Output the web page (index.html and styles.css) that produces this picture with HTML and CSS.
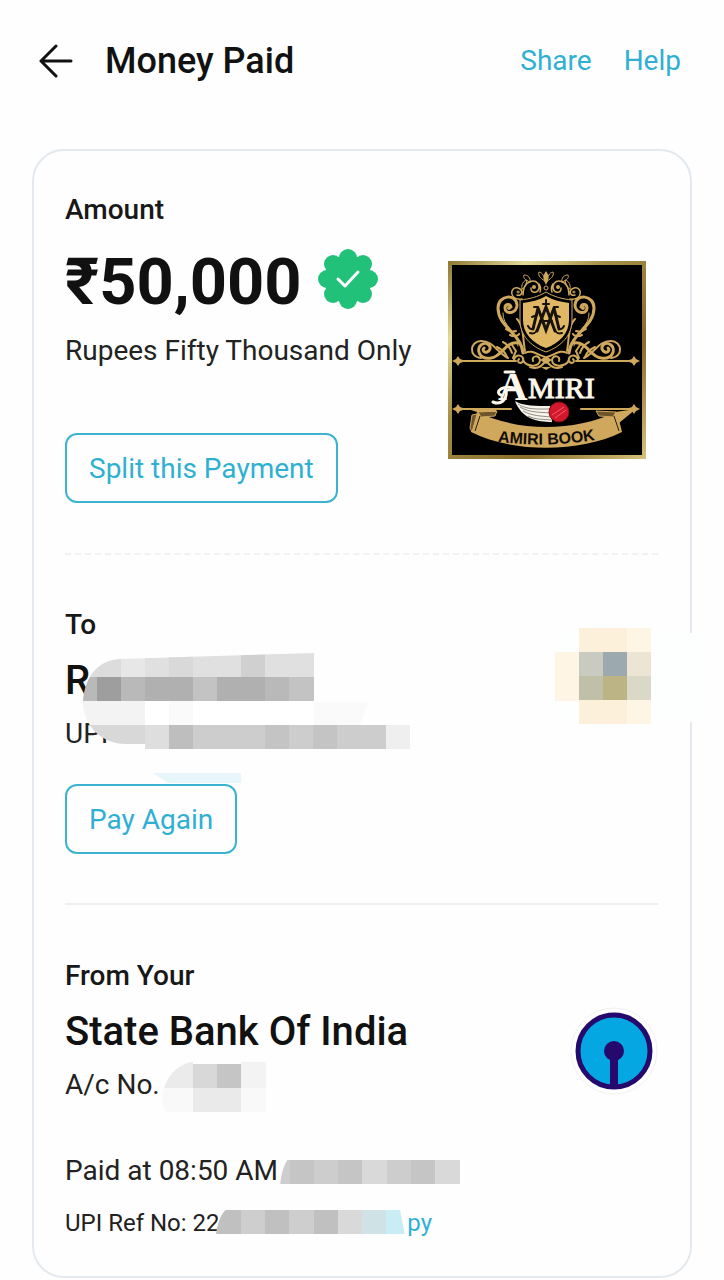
FILE: index.html
```
<!DOCTYPE html>
<html lang="en">
<head>
    <meta charset="UTF-8">
    <meta name="viewport" content="width=device-width, initial-scale=1.0">
    <title>Money Paid</title>
    <link rel="stylesheet" href="styles.css">
</head>
<body>
    <header class="topbar">
        <button class="back" type="button" aria-label="Back">
            <svg width="34" height="36" viewBox="0 0 34 36" fill="none" stroke="#111" stroke-width="3" stroke-linecap="round" stroke-linejoin="round">
                <path d="M32 18H2M17 3L2 18l15 15"/>
            </svg>
        </button>
        <h1>Money Paid</h1>
        <nav class="actions">
            <a href="#">Share</a>
            <a href="#">Help</a>
        </nav>
    </header>

    <main class="card">
        <section class="amount-section">
            <div>
                <h2 class="label">Amount</h2>
                <div class="amount">
                    <strong>₹50,000</strong>
                    <svg class="verified" width="62" height="62" viewBox="-31 -31 62 62" aria-label="Verified">
                        <g fill="#21c17a">
                            <circle r="24"/>
                            <circle cx="0" cy="-21" r="9"/>
                            <circle cx="15" cy="-15" r="9"/>
                            <circle cx="21" cy="0" r="9"/>
                            <circle cx="15" cy="15" r="9"/>
                            <circle cx="0" cy="21" r="9"/>
                            <circle cx="-15" cy="15" r="9"/>
                            <circle cx="-21" cy="0" r="9"/>
                            <circle cx="-15" cy="-15" r="9"/>
                        </g>
                        <path d="M-10 0l7 7L10-7" fill="none" stroke="#fff" stroke-width="3" stroke-linecap="round" stroke-linejoin="round"/>
                    </svg>
                </div>
                <p class="words">Rupees Fifty Thousand Only</p>
                <button class="outline" type="button">Split this Payment</button>
            </div>
            <svg class="crest" width="198" height="198" viewBox="0 0 198 198" role="img" aria-label="Amiri Book">
                <defs>
                    <linearGradient id="frame" x1="0" y1="0" x2="1" y2="1">
                        <stop offset="0" stop-color="#8d7733"/>
                        <stop offset=".2" stop-color="#e3d99a"/>
                        <stop offset=".4" stop-color="#a58f45"/>
                        <stop offset=".7" stop-color="#8a6c2c"/>
                        <stop offset="1" stop-color="#d8c27a"/>
                    </linearGradient>
                    <path id="ribbon-line" d="M45 180Q98 188 152 178"/>
                    <g id="half" fill="none" stroke="#cfa85c" stroke-linecap="round">
                        <path stroke-width="3" d="M75 92C73 72 50 66 50 47C50 34 68 32 69 44C69 53 57 54 57 47C57 43 62 42 63 46"/>
                        <path stroke-width="1" d="M70 85C70 69 54 66 55 52"/>
                        <path stroke-width="2" d="M69 58C76 65 75 80 77 90M58 68C62 71 65 71 68 70M62 74c4 2 8 1 9-1"/>
                        <path stroke-width="1.5" d="M74 38C61 40 61 25 70 27C76 29 74 36 69 34M75 34C75 19 89 16 91 25C92 33 82 33 83 27M92 31c1-3 1-5-1-8"/>
                        <path stroke-width="1" d="M74 28c-1-4 1-8 5-9-1 5-2 8-5 9M82 21c-6-2-7-5-6-7 4 0 7 3 6 7M97 20C91 17 90 13 91 11c4 1 5 4 6 9"/>
                        <path stroke-width="3" d="M70 82C57 80 54 96 43 97C31 99 28 88 33 84C40 79 46 88 39 91C36 92 34 89 36 87"/>
                        <path stroke-width="2" d="M33 97C20 96 22 80 33 80C46 80 48 91 60 97"/>
                        <path stroke-width="2" d="M49 86c6 3 8 5 10 10M55 81c4 2 7 5 9 11M64 84l4 6-3 7"/>
                        <path stroke-width="2" d="M10 100H68M10 148H63"/>
                        <path stroke-width="2" d="M66 99C67 92 77 94 75 100C73 104 68 101 71 98M75 99C78 106 92 107 92 99C91 93 83 95 85 100M77 92C84 88 89 94 97 96M82 106c6 2 10 1 15-5"/>
                        <path fill="#cfa85c" stroke="none" d="M10 95l2 3 6 2-6 2-2 3-2-3-4-2 4-2zM10 143l2 3 6 2-6 2-2 3-2-3-4-2 4-2z"/>
                        <circle cx="61" cy="47" r="1" stroke-width="2"/>
                        <circle cx="70" cy="31" r="1" stroke-width="1"/>
                        <circle cx="86" cy="26" r="1" stroke-width="2"/>
                    </g>
                </defs>
                <rect width="198" height="198" fill="url(#frame)"/>
                <rect x="4" y="4" width="190" height="190" fill="#000"/>
                <use href="#half"/>
                <use href="#half" transform="translate(196 0) scale(-1 1)"/>
                <path fill="#cfa85c" d="M98 10q5 6 0 14q-5-8 0-14zM98 103l-6-4 6-4 6 4zM98 109l-5-3h10z"/>
                <circle cx="98" cy="27" r="2" fill="none" stroke="#cfa85c"/>
                <path fill="#000" stroke="#cfa85c" d="M98 31C90 36 81 38 72 39V59C72 74 82 85 98 91C114 85 124 74 124 59V39C115 38 106 36 98 31Z"/>
                <path fill="#e0b865" d="M98 35C91 39 83 41 75 42V59C75 72 84 82 98 87C112 82 121 72 121 59V42C113 41 105 39 98 35Z"/>
                <!-- crossed monogram ornament, symmetric around x=98 -->
                <g fill="none" stroke="#17120a" stroke-linecap="round">
                    <path stroke-width="3" d="M98 46L107 70M98 46L89 70M90 47L98 69L106 47M90 47L85 68M106 47L111 68"/>
                    <path stroke-width="2" d="M98 39V48M95 43h6M92 60h12M86 46h4M106 46h4M84 56l5-2M112 56l-5-2M82 72c3 1 6 0 7-3M114 72c-3 1-6 0-7-3M80 65c2 4 4 4 6 1M116 65c-2 4-4 4-6 1"/>
                </g>

                <text class="crest-serif" x="50" y="139" font-size="41" fill="#fbf7ea">A</text>
                <text class="crest-serif light" x="80" y="137" font-size="30" fill="#fbf7ea">MIRI</text>
                <path fill="none" stroke="#fbf7ea" stroke-width="3" stroke-linecap="round" d="M57 111h9M66 127C52 124 47 132 53 134M58 127C60 140 52 144 45 141"/>

                <path fill="#d0a85d" d="M29 151C72 171 124 171 169 151L174 171C132 192 64 192 23 171Z"/>
                <path fill="#6d542b" stroke="#d0a85d" d="M30 151l19-1-2 5-14 1zM168 151l-20-1 3 5 14 1zM29 153l-5 18-2-4 2-13z"/>
                <path fill="#d0a85d" d="M23 149h25v2H29zM167 151l21-3-17 14z"/>
                <path fill="none" stroke="#2b1e0d" d="M32 155l-5 15M166 155l5 15"/>
                <text class="crest-sans" font-size="16" fill="#100c06"><textPath href="#ribbon-line" startOffset="50%" text-anchor="middle">AMIRI BOOK</textPath></text>

                <path fill="#f7f4ec" d="M67 140C75 145 88 145 102 145L104 161C89 161 74 158 67 140Z"/>
                <path fill="none" stroke="#4a443c" d="M70 143C79 149 90 148 102 148M72 146C82 152 92 151 103 152M75 150C84 155 93 155 103 156M80 155C88 159 95 158 103 159" stroke-width=".6"/>
                <circle cx="111" cy="151" r="10" fill="#d3182c" stroke="#7e0b18"/>
                <path fill="none" stroke="#f0606c" d="M104 154l12-8M107 157l11-8"/>
            </svg>
        </section>

        <section class="to-section">
            <div class="party">
                <h2 class="label">To</h2>
                <p class="name">R</p>
                <p class="detail">UPI</p>
                <!-- payee name and UPI id are masked -->
                <svg class="mask mask-payee" width="350" height="138" viewBox="0 0 350 138" aria-hidden="true">
                    <clipPath id="payee-clip"><path d="M350 2V138H81V92H62C38 92 19 74 19 50C20 28 32 8 56 7L250 1V50H350Z"/></clipPath>
                    <g clip-path="url(#payee-clip)" shape-rendering="crispEdges">
                        <path fill="#dcdcdc" d="M10 0h47v25H10z"/>
                        <path fill="#e7e7e7" d="M57 0h24v25H57z"/>
                        <path fill="#e0e0e0" d="M81 0h96v25H81z"/>
                        <path fill="#d9d9d9" d="M105 0h24v25h-24z"/>
                        <path fill="#d0d0d0" d="M177 0h24v25h-24z"/>
                        <path fill="#e0e0e0" d="M201 0h49v25h-49z"/>
                        <path fill="#b9b9b9" d="M10 25h240v24H10z"/>
                        <path fill="#9e9e9e" d="M33 25h24v24H33z"/>
                        <path fill="#b0b0b0" d="M81 25h48v24H81zM153 25h48v24h-48z"/>
                        <path fill="#c3c3c3" d="M129 25h24v24h-24zM225 25h25v24h-25z"/>
                        <path fill="#f3f3f3" d="M10 49h71v24H10z"/>
                        <path fill="#fff" d="M81 49h169v24H81z"/>
                        <path fill="#fafafa" d="M105 49h24v24h-24zM250 49h55l-9 24h-46z"/>
                        <path fill="#d8d8d8" d="M10 73h71v24H10z"/>
                        <path fill="#dedede" d="M81 73h24v24H81z"/>
                        <path fill="#bebebe" d="M105 73h24v24h-24z"/>
                        <path fill="#cdcdcd" d="M129 73h193v24H129z"/>
                        <path fill="#c4c4c4" d="M201 73h24v24h-24zM249 73h24v24h-24z"/>
                        <path fill="#efefef" d="M322 73h24v24h-24z"/>
                        <path fill="#e7f6fb" d="M89 121h88v10h-73z"/>
                    </g>
                </svg>
            </div>
            <button class="outline" type="button">Pay Again</button>
            <svg class="mask mask-avatar" width="145" height="98" viewBox="0 0 145 98" aria-hidden="true">
                <rect x="0" y="4" width="145" height="91" rx="14" fill="#fdfefe"/>
                <g shape-rendering="crispEdges">
                    <path fill="#fff5e5" d="M0 24h24v49H0zM72 0h24v24H72zM72 72h24v24H72z"/>
                    <path fill="#fdf0db" d="M24 0h48v24H24zM24 72h48v24H24z"/>
                    <path fill="#c9cbc1" d="M24 24h24v24H24z"/>
                    <path fill="#9caab0" d="M48 24h24v24H48z"/>
                    <path fill="#ece5d3" d="M72 24h24v24H72z"/>
                    <path fill="#c0c0a9" d="M24 48h24v24H24z"/>
                    <path fill="#bdb485" d="M48 48h24v24H48z"/>
                    <path fill="#dad8c7" d="M72 48h24v24H72z"/>
                </g>
            </svg>
        </section>

        <section class="from-section">
            <div class="bank-row">
                <div class="party">
                    <h2 class="label">From Your</h2>
                    <p class="name">State Bank Of India</p>
                    <p class="detail">A/c No.</p>
                    <svg class="mask mask-account" width="104" height="50" viewBox="0 0 104 50" aria-hidden="true">
                        <clipPath id="account-clip"><path d="M104 0H32C16 0 0 18 0 38Q1 46 5 50H104Z"/></clipPath>
                        <g clip-path="url(#account-clip)" shape-rendering="crispEdges">
                            <path fill="#ebebeb" d="M0 0h31v26H0z"/>
                            <path fill="#d8d8d8" d="M31 2h24v24H31z"/>
                            <path fill="#c5c5c5" d="M55 2h24v24H55z"/>
                            <path fill="#f3f3f3" d="M79 0h25v26H79z"/>
                            <path fill="#f9f9f9" d="M0 26h31v24H0zM79 26h25v24H79z"/>
                            <path fill="#eaeaea" d="M31 26h48v24H31z"/>
                        </g>
                    </svg>
                </div>
                <svg class="bank-logo" width="88" height="88" viewBox="-44 -44 88 88" role="img" aria-label="State Bank of India">
                    <circle r="43" fill="#fff" stroke="#f1f1f5"/>
                    <circle r="36" fill="#04a7e2" stroke="#25096c" stroke-width="5"/>
                    <circle r="10" fill="#25096c"/>
                    <path fill="#25096c" d="M-4 0h8v37h-8z"/>
                </svg>
            </div>
            <p class="paid-at">Paid at 08:50 AM
                <svg class="mask mask-date" width="180" height="26" viewBox="0 0 180 26" aria-hidden="true">
                    <clipPath id="date-clip"><path d="M180 0H8Q2 8 0 26H180Z"/></clipPath>
                    <g clip-path="url(#date-clip)" shape-rendering="crispEdges">
                        <path fill="#cdcdcd" d="M0 1h180v24H0z"/>
                        <path fill="#c5c5c5" d="M10 1h24v24H10zM58 1h24v24H58zM131 1h24v24h-24z"/>
                        <path fill="#d9d9d9" d="M82 1h25v24H82zM155 1h25v24h-25z"/>
                    </g>
                </svg>
            </p>
            <p class="ref">UPI Ref No: 22
                <a href="#">Copy</a>
                <svg class="mask mask-ref" width="192" height="32" viewBox="0 0 192 32" aria-hidden="true">
                    <path fill="#fefefe" d="M3 3h182l7 8v21H0z"/>
                    <clipPath id="ref-clip"><path d="M0 28Q3 8 10 3H184L189 28Z"/></clipPath>
                    <g clip-path="url(#ref-clip)" shape-rendering="crispEdges">
                        <path fill="#cecece" d="M0 3h122v24H0z"/>
                        <path fill="#c0c0c0" d="M0 3h25v24H0zM49 3h24v24H49zM98 3h24v24H98z"/>
                        <path fill="#d9d9d9" d="M122 3h24v24h-24z"/>
                        <path fill="#cfe3e6" d="M146 3h24v24h-24z"/>
                        <path fill="#c9edf5" d="M170 3h20v24h-20z"/>
                    </g>
                </svg>
            </p>
        </section>
    </main>
</body>
</html>
```
FILE: styles.css
```
* {
    box-sizing: border-box;
}
body {
    margin: 0;
    font-family: Roboto, "Liberation Sans", sans-serif;
    font-size: 28px;
    line-height: 32px;
    color: #222;
    background-color: #fefefe;
}
h1, h2, p {
    margin: 0;
}
a {
    color: #2fb0d3;
    text-decoration: none;
}
button {
    font-family: inherit;
    font-size: 28px;
    cursor: pointer;
}
svg {
    display: block;
}
.topbar {
    display: flex;
    align-items: center;
    padding: 37px 43px 0 39px;
}
.back {
    padding: 0;
    border: none;
    background: none;
}
h1 {
    margin-left: 32px;
    font-size: 36px;
    font-weight: 500;
    line-height: 48px;
    color: #111;
}
.actions {
    display: flex;
    gap: 32px;
    margin-left: auto;
}
.card {
    margin: 64px 32px 0;
    padding: 43px 32px 37px 31px;
    border: 2px solid #e3e9ee;
    border-radius: 32px;
}
.label {
    font-size: 28px;
    font-weight: 500;
    color: #181818;
}
.amount-section {
    display: flex;
    justify-content: space-between;
    align-items: flex-start;
    padding-bottom: 50px;
    border-bottom: 2px dashed #f2f2f2;
}
.amount {
    display: flex;
    align-items: center;
    gap: 15px;
    margin: 20px 0 17px;
}
.amount strong {
    font-size: 65px;
    font-weight: 700;
    line-height: 72px;
    color: #111;
}
.verified {
    margin-bottom: 6px;
}
.outline {
    display: block;
    height: 70px;
    padding: 0 22px;
    border: 2px solid #3cb3cf;
    border-radius: 12px;
    background: none;
    color: #2fb0d3;
}
.amount-section .outline {
    margin-top: 66px;
}
.crest {
    flex-shrink: 0;
    margin: 67px 12px 0 0;
}
.crest-serif {
    font-family: "Liberation Serif", serif;
    font-weight: 700;
}
.crest-serif.light {
    font-weight: 400;
    stroke: #fbf7ea;
}
.crest-sans {
    font-family: "Liberation Sans", sans-serif;
    font-weight: 700;
}
.to-section {
    position: relative;
    padding: 54px 0 49px;
    border-bottom: 2px solid #eeeeee;
}
.party {
    position: relative;
}
.name {
    margin: 16px 0 13px;
    font-size: 40px;
    font-weight: 500;
    line-height: 48px;
    color: #111;
}
.to-section .outline {
    margin-top: 34px;
}
.mask {
    position: absolute;
}
.mask-payee {
    left: -1px;
    top: 43px;
}
.mask-avatar {
    right: -42px;
    top: 73px;
}
.mask-account {
    left: 97px;
    top: 102px;
}
.from-section {
    padding-top: 55px;
}
.bank-row {
    display: flex;
    justify-content: space-between;
    align-items: flex-start;
}
.bank-logo {
    flex-shrink: 0;
    margin-top: 47px;
}
.paid-at {
    position: relative;
    margin-top: 54px;
}
.mask-date {
    left: 215px;
    top: 4px;
}
.ref {
    position: relative;
    margin-top: 20px;
    font-size: 24px;
}
.ref a {
    position: absolute;
    left: 313px;
}
.mask-ref {
    left: 151px;
    top: 0;
}
```
